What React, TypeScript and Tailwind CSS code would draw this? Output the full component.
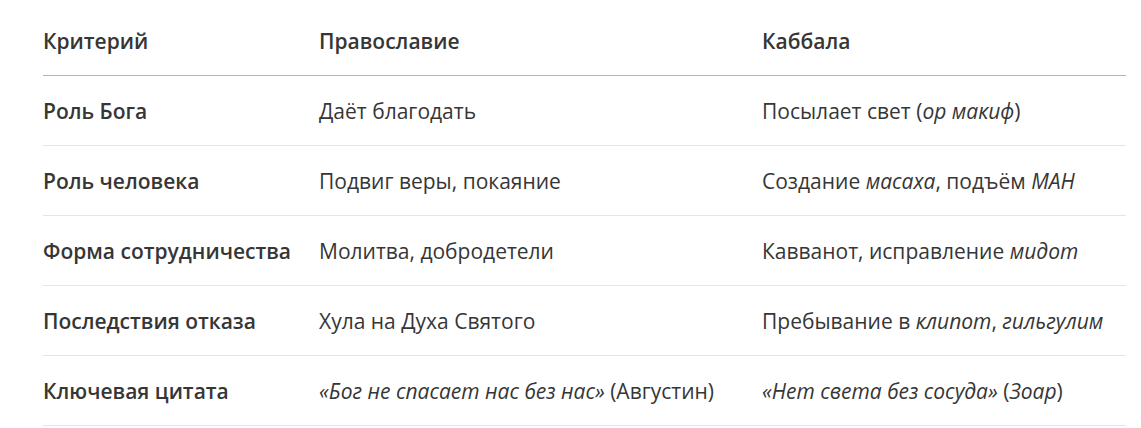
const rows: { label: string; a: React.ReactNode; b: React.ReactNode }[] = [
  {
    label: "Роль Бога",
    a: "Даёт благодать",
    b: (
      <>
        Посылает свет (<em>ор макиф</em>)
      </>
    ),
  },
  {
    label: "Роль человека",
    a: "Подвиг веры, покаяние",
    b: (
      <>
        Создание <em>масаха</em>, подъём <em>МАН</em>
      </>
    ),
  },
  {
    label: "Форма сотрудничества",
    a: "Молитва, добродетели",
    b: (
      <>
        Кавванот, исправление <em>мидот</em>
      </>
    ),
  },
  {
    label: "Последствия отказа",
    a: "Хула на Духа Святого",
    b: (
      <>
        Пребывание в <em>клипот</em>, <em>гильгулим</em>
      </>
    ),
  },
  {
    label: "Ключевая цитата",
    a: (
      <>
        <em>«Бог не спасает нас без нас»</em> (Августин)
      </>
    ),
    b: (
      <>
        <em>«Нет света без сосуда»</em> (<em>Зоар</em>)
      </>
    ),
  },
];

export default function App() {
  return (
    <div
      className="min-h-[428px] w-[1141px] bg-white pt-[5px] pl-[43px] text-[#363636]"
      style={{ fontFamily: '"Open Sans", "Noto Sans", sans-serif' }}
    >
      <table className="w-[1083px] table-fixed border-collapse text-left text-[21px]">
        <colgroup>
          <col className="w-[276px]" />
          <col className="w-[443px]" />
          <col />
        </colgroup>
        <thead>
          <tr className="h-[70px] border-b border-[#b4b4b4]">
            <th className="pt-1 font-semibold">Критерий</th>
            <th className="pt-1 font-semibold">Православие</th>
            <th className="pt-1 font-semibold">Каббала</th>
          </tr>
        </thead>
        <tbody>
          {rows.map((r) => (
            <tr key={r.label} className="h-[70px] border-b border-[#e5e5e5]">
              <td className="pt-1 font-semibold">{r.label}</td>
              <td className="pt-1">{r.a}</td>
              <td className="pt-1">{r.b}</td>
            </tr>
          ))}
        </tbody>
      </table>
    </div>
  );
}
